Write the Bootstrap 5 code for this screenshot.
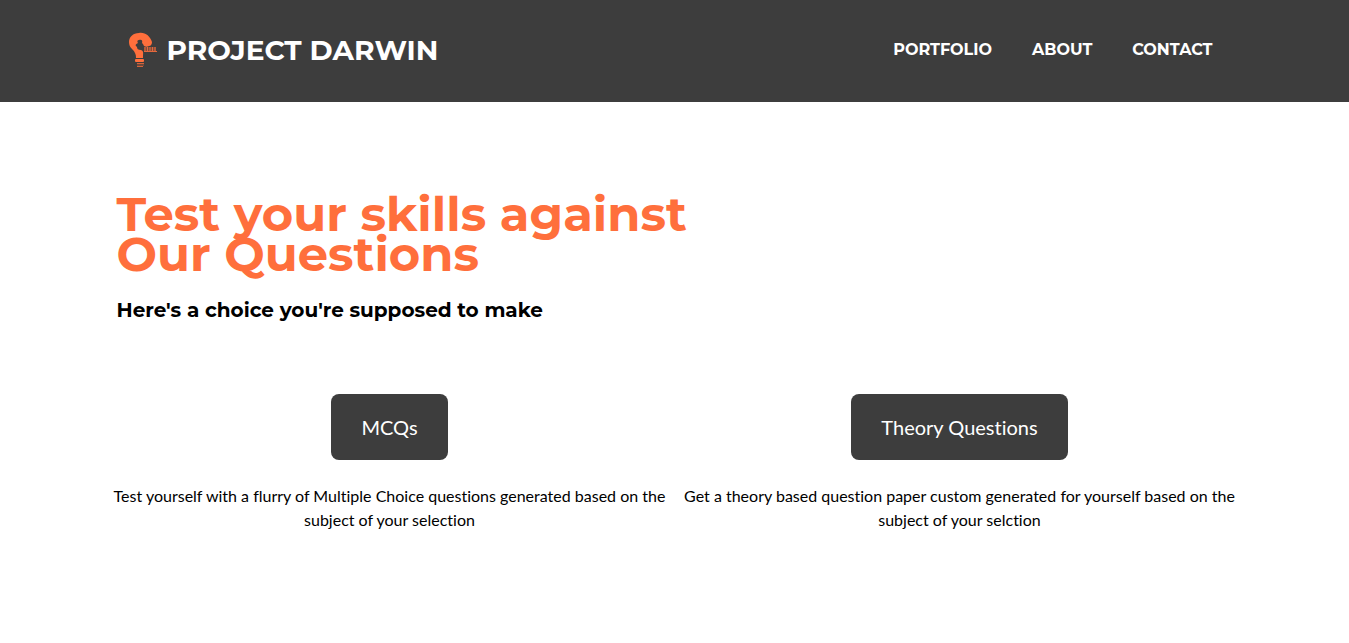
<!DOCTYPE html>
<html lang="en">
<head>
<meta charset="utf-8">
<meta name="viewport" content="width=device-width, initial-scale=1">
<title>Project Darwin</title>
<link href="https://cdn.jsdelivr.net/npm/bootstrap@5.3.0/dist/css/bootstrap.min.css" rel="stylesheet">
<style>
  :root { --ink: #3d3d3d; --accent: #ff6f3c; }
  body, button { font-variant-ligatures: none; }
  body { font-family: Lato, sans-serif; color: #000; background: #fff; }
  .display-face { font-family: Montserrat, Inter, sans-serif; font-weight: 700; }
  .site-header { background: var(--ink); padding: 29px 0 31px; }
  .site-header .navbar-brand { font-size: 28px; line-height: 42px; gap: 10px; padding: 0; margin-left: 12px; color: #fff; }
  .site-header .navbar-nav { gap: 40px; margin-right: 20px; }
  .site-header .navbar-nav .nav-link { font-size: 16px; line-height: 24px; color: #fff; padding: 8px 0; }
  .hero { padding-top: 92px; padding-bottom: 64px; }
  .hero-title { font-size: 48px; line-height: 40px; color: var(--accent); margin-bottom: 24px; }
  .hero-sub { font-size: 20px; line-height: 24px; margin-bottom: 72px; }
  .btn-choice { background: var(--ink); color: #fff; font-size: 20px; line-height: 30px; padding: 18px 30px; border: 0; border-radius: 8px; margin-bottom: 24px; }
  .btn-choice:hover { background: var(--accent); color: #fff; }
</style>
</head>
<body>
<header>
  <nav class="navbar navbar-expand-lg site-header" aria-label="Main">
    <div class="container">
      <a class="navbar-brand display-face d-flex align-items-center me-0" href="#">
        <svg width="28" height="36" viewBox="0 0 28 36" aria-hidden="true">
          <path fill="#ff6f3c" d="M10 1C16 0 21 4 23 10c0 2-1 4-3 4-2 1-3 1-5 0l-1-2-1-1c1-3-1-4-3-3-2 0-2 2-1 3-2 1-3 2-2 3l1 1c0 2 1 3 4 3 3 1 2 3 2 8H7c0-4-1-6-4-9C1 15 0 13 0 10 0 5 4 1 10 1Z"/>
          <rect x="6" y="27" width="9" height="3" rx="1" fill="#ff6f3c"/>
          <path d="M8 31.500h7M8 34.500h6" stroke="#d4643a"/>
          <path d="M8 33h7" stroke="#a3543a"/>
          <path fill="#ff6f3c" opacity=".35" d="M15 15h12v4H15z"/>
          <path d="M16 15v4M18.500 15v4M21 15v4M23.500 15v4M26 15v4M15 19.500h13" stroke="#e5683c"/>
        </svg>
        PROJECT DARWIN
      </a>
      <ul class="navbar-nav flex-row flex-wrap display-face">
        <li class="nav-item"><a class="nav-link" href="#">PORTFOLIO</a></li>
        <li class="nav-item"><a class="nav-link" href="#">ABOUT</a></li>
        <li class="nav-item"><a class="nav-link" href="#">CONTACT</a></li>
      </ul>
    </div>
  </nav>
</header>
<main class="container hero">
  <h1 class="display-face hero-title">Test your skills against<br>Our Questions</h1>
  <h2 class="display-face hero-sub">Here's a choice you're supposed to make</h2>
  <div class="row text-center gy-4">
    <section class="col-lg-6 px-1">
      <button type="button" class="btn btn-choice">MCQs</button>
      <p>Test yourself with a flurry of Multiple Choice questions generated based on the subject of your selection</p>
    </section>
    <section class="col-lg-6 px-1">
      <button type="button" class="btn btn-choice">Theory Questions</button>
      <p>Get a theory based question paper custom generated for yourself based on the subject of your selction</p>
    </section>
  </div>
</main>
<script src="https://cdn.jsdelivr.net/npm/bootstrap@5.3.0/dist/js/bootstrap.bundle.min.js"></script>
</body>
</html>
